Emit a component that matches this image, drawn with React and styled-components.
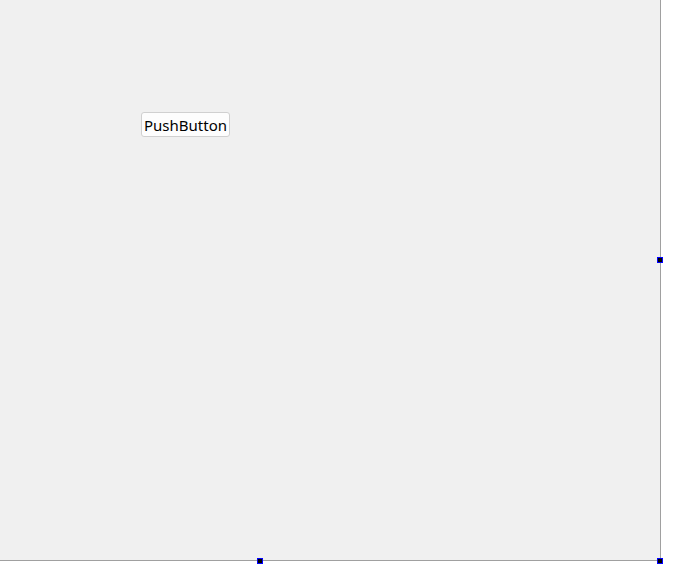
import React from 'react'
import styled, { createGlobalStyle } from 'styled-components'

const GlobalStyle = createGlobalStyle`
  html, body {
    margin: 0;
    padding: 0;
    background: #ffffff;
    font-family: 'Noto Sans', 'Open Sans', sans-serif;
  }
`

const Page = styled.div`
  width: 691px;
  height: 582px;
  background: #ffffff;
`

const Canvas = styled.div`
  position: relative;
  width: 660px;
  height: 560px;
  background: #f0f0f0;
  border-right: 1px solid #a0a0a0;
  border-bottom: 1px solid #a0a0a0;
`

const PushButton = styled.button`
  position: absolute;
  left: ${(p) => p.x}px;
  top: ${(p) => p.y}px;
  width: 89px;
  height: 25px;
  padding: 1px 0 0;
  background: #fdfdfd;
  border: 1px solid #d0d0d0;
  border-radius: 3px;
  font-family: 'Noto Sans', 'Open Sans', sans-serif;
  font-size: 15px;
  color: #000000;
  line-height: 22px;
`

// selection handle: blue outline, black fill
const Handle = styled.div`
  position: absolute;
  left: ${(p) => p.x - 3}px;
  top: ${(p) => p.y - 3}px;
  width: 4px;
  height: 4px;
  background: #000000;
  border: 1px solid #0000ff;
`

export default function App() {
  return (
    <Page>
      <GlobalStyle />
      <Canvas>
        <PushButton x={141} y={112}>PushButton</PushButton>
        <Handle x={660} y={260} />
        <Handle x={260} y={561} />
        <Handle x={660} y={561} />
      </Canvas>
    </Page>
  )
}
